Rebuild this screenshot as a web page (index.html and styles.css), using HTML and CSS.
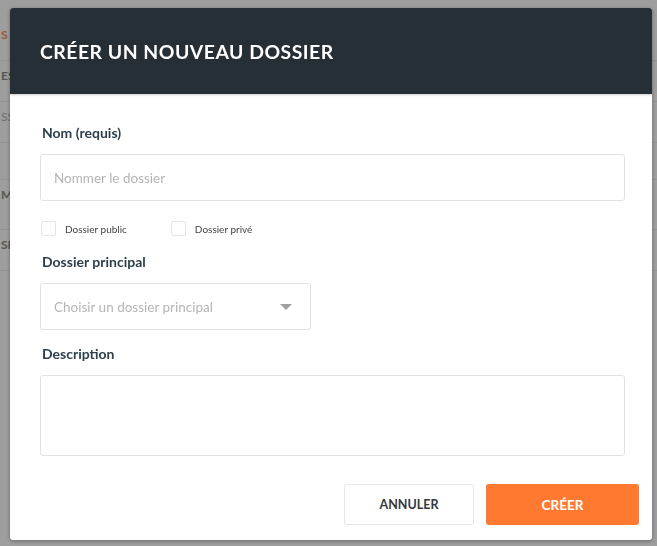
FILE: index.html
```html
<!DOCTYPE html>
<html lang="fr">
<head>
  <meta charset="UTF-8" />
  <meta name="viewport" content="width=device-width, initial-scale=1.0"/>
  <title>Créer un nouveau dossier</title>
  <link rel="stylesheet" href="styles.css">
</head>
<body>
  <div class="page">
    <ul class="side-nav">
      <li class="nav-item active">S</li>
      <li class="nav-item">ES</li>
      <li class="nav-item light">SS</li>
      <li class="nav-item spacer"></li>
      <li class="nav-item tall">MF</li>
      <li class="nav-item">SH</li>
    </ul>
  </div>

  <div class="overlay">
    <div class="modal">
      <div class="modal-header">
        <h2>Créer un nouveau dossier</h2>
      </div>

      <form class="modal-body">
        <label class="field-label" for="folderName">Nom (requis)</label>
        <input class="text-input" type="text" id="folderName" placeholder="Nommer le dossier">

        <div class="check-row">
          <label class="check"><span class="box"></span>Dossier public</label>
          <label class="check"><span class="box"></span>Dossier privé</label>
        </div>

        <label class="field-label">Dossier principal</label>
        <div class="select">
          <span>Choisir un dossier principal</span>
          <span class="caret"></span>
        </div>

        <label class="field-label" for="desc">Description</label>
        <textarea class="text-area" id="desc"></textarea>

        <div class="actions">
          <button type="button" class="btn btn-cancel">Annuler</button>
          <button type="button" class="btn btn-create">Créer</button>
        </div>
      </form>
    </div>
  </div>
</body>
</html>
```

FILE: styles.css
```css
body {
  margin: 0;
  font-family: Lato, "Open Sans", sans-serif;
  background: #fff;
  height: 546px;
  overflow: hidden;
}

.page {
  height: 546px;
}

.side-nav {
  list-style: none;
  margin: 0;
  padding: 20px 0 0;
  width: 100%;
}

.nav-item {
  height: 40px;
  line-height: 30px;
  font-size: 12px;
  font-weight: 700;
  color: #8a8a8a;
  border-bottom: 1px solid #eee;
  padding-left: 1px;
  white-space: nowrap;
}

.nav-item.active {
  color: #ff8a50;
}

.nav-item.light {
  font-weight: 400;
  color: #b0b0b0;
}

.nav-item.spacer {
  height: 36px;
}

.nav-item.tall {
  height: 49px;
}

.overlay {
  position: fixed;
  inset: 0;
  background: rgba(0, 0, 0, 0.38);
  padding: 8px 0 0 10px;
}

.modal {
  width: 642px;
  height: 532px;
  background: #fff;
  border-radius: 3px;
  overflow: hidden;
  box-shadow: 0 1px 4px rgba(0, 0, 0, 0.35);
}

.modal-header {
  background: #252f35;
  height: 86px;
  display: flex;
  align-items: center;
  padding-left: 30px;
  box-shadow: 0 1px 2px rgba(0, 0, 0, 0.2);
}

.modal-header h2 {
  margin: 0;
  color: #fff;
  font-size: 19.4px;
  font-weight: 700;
  text-transform: uppercase;
  letter-spacing: 0.5px;
}

.modal-body {
  padding: 30px 27px 0 30px;
  display: flex;
  flex-direction: column;
}

.field-label {
  display: block;
  font-size: 14px;
  font-weight: 700;
  color: #2b3f4c;
  margin-left: 2px;
  line-height: 18px;
}

.text-input {
  margin-top: 12px;
  height: 47px;
  box-sizing: border-box;
  border: 1px solid #e2e2e2;
  border-radius: 3px;
  padding: 0 13px;
  font-family: inherit;
  font-size: 13.5px;
  outline: none;
}

.text-input::placeholder {
  color: #b5b5b5;
}

.check-row {
  display: flex;
  gap: 44px;
  margin: 20px 0 17px 1px;
}

.check {
  display: flex;
  align-items: center;
  font-size: 10px;
  color: #444;
}

.box {
  width: 13px;
  height: 13px;
  border: 1px solid #e4e4e4;
  border-radius: 2px;
  margin-right: 9px;
}

.select {
  margin-top: 12px;
  width: 271px;
  height: 47px;
  box-sizing: border-box;
  border: 1px solid #e2e2e2;
  border-radius: 3px;
  padding: 0 18px 0 13px;
  display: flex;
  align-items: center;
  justify-content: space-between;
  font-size: 13.5px;
  color: #b5b5b5;
}

.caret {
  width: 0;
  height: 0;
  border-left: 6px solid transparent;
  border-right: 6px solid transparent;
  border-top: 6px solid #a0a0a0;
}

.select + .field-label {
  margin-top: 15px;
}

.text-area {
  margin-top: 12px;
  height: 81px;
  box-sizing: border-box;
  border: 1px solid #e2e2e2;
  border-radius: 3px;
  resize: none;
  outline: none;
}

.actions {
  display: flex;
  justify-content: flex-end;
  gap: 12px;
  margin: 28px -14px 0 0;
}

.btn {
  height: 41px;
  border-radius: 3px;
  font-family: inherit;
  font-weight: 700;
  text-transform: uppercase;
  font-size: 12.5px;
  cursor: pointer;
}

.btn-cancel {
  width: 130px;
  background: #fff;
  border: 1px solid #e6e6e6;
  color: #33393d;
}

.btn-create {
  width: 153px;
  background: #ff7a30;
  border: none;
  color: #fff;
  font-size: 13.5px;
}
```
